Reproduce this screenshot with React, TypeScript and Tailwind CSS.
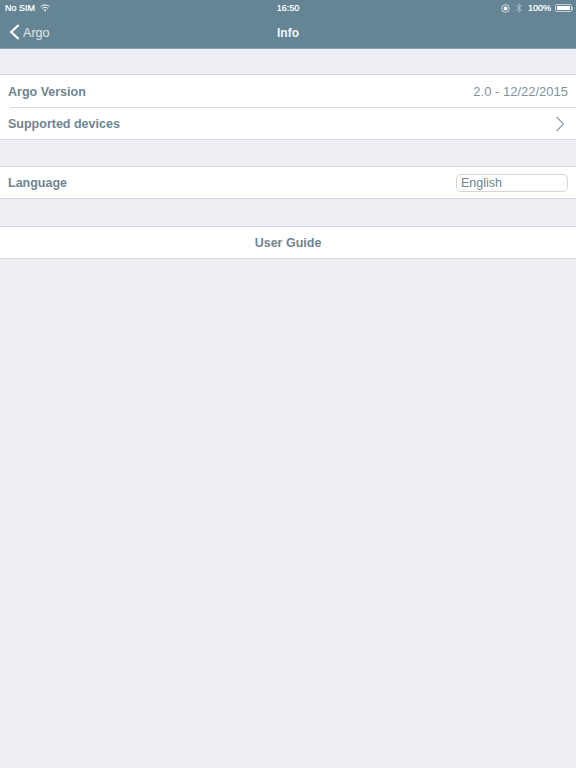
import React from 'react';

const font = "font-['Liberation_Sans',Arial,sans-serif]";

const StatusBar = () => (
	<div className="flex h-[16px] items-center justify-between pl-[5px] pr-[3px] text-[9px] leading-none text-white/90 [text-shadow:0_0_0.3px_white]">
		<div className="flex items-center gap-[5px]">
			<span>No SIM</span>
			<svg width="10" height="8" viewBox="0 0 10 8" fill="none" stroke="white" strokeWidth="1">
				<path d="M0.6 2.8 C3 0.4 7 0.4 9.4 2.8" />
				<path d="M2.2 4.4 C3.8 3 6.2 3 7.8 4.4" />
				<path d="M5 7.4 L3.7 6 C4.5 5.4 5.5 5.4 6.3 6 Z" fill="white" stroke="none" />
			</svg>
		</div>
		<span className="absolute left-0 right-0 text-center">16:50</span>
		<div className="z-10 flex items-center gap-[3px]">
			<svg width="9" height="9" viewBox="0 0 9 9">
				<circle cx="4.5" cy="4.5" r="3.8" fill="none" stroke="white" strokeWidth="0.9" opacity="0.8" />
				<circle cx="4.5" cy="4.5" r="1.9" fill="white" />
			</svg>
			<svg className="mx-[3px]" width="6" height="10" viewBox="0 0 6 10" fill="none" stroke="white" strokeWidth="0.8" opacity="0.55">
				<path d="M0.5 2.6 L5 6.8 L3 9 V1 L5 3.2 L0.5 7.4" />
			</svg>
			<span>100%</span>
			<div className="ml-[1px] flex items-center">
				<div className="flex h-[8px] w-[17px] items-center rounded-[2px] border border-white/60 p-px">
					<div className="h-full w-full rounded-[1px] bg-white" />
				</div>
				<div className="h-[3px] w-[1px] bg-white/60" />
			</div>
		</div>
	</div>
);

const NavBar = () => (
	<div className="relative flex h-[32px] items-center">
		<svg className="ml-[9px] mr-[3px]" width="11" height="16" viewBox="0 0 11 16" fill="none" stroke="white" strokeWidth="2.1">
			<path d="M9.6 1 L2.2 8 L9.6 15" />
		</svg>
		<span className="pt-[2px] text-[12.6px] text-white/80">Argo</span>
		<span className="absolute left-0 right-0 pt-[1px] text-center text-[12px] font-bold text-white/95">Info</span>
	</div>
);

const Label = ({ text }: { text: string }) => (
	<span className="pt-[2px] text-[12.5px] font-bold text-[#6f8592]">{text}</span>
);

export default function App() {
	return (
		<div className={`${font} relative min-h-[768px] bg-[#efeef5]`}>
			<header className="border-b border-[#8fa0ab] bg-[#658594]">
				<StatusBar />
				<NavBar />
			</header>

			<section className="mt-[25px] border-y border-[#d6d5e0] bg-white">
				<div className="flex h-[32px] items-center justify-between px-[8px]">
					<Label text="Argo Version" />
					<span className="pt-[2px] text-[13px] text-[#7f949f]">2.0 - 12/22/2015</span>
				</div>
				<div className="ml-[10px] h-px bg-[#d8d8de]" />
				<div className="flex h-[31px] items-center justify-between px-[8px] pr-[11px]">
					<Label text="Supported devices" />
					<svg width="10" height="16" viewBox="0 0 10 16" fill="none" stroke="#8b9aa3" strokeWidth="1.1">
						<path d="M1.5 1 L8.5 8 L1.5 15" />
					</svg>
				</div>
			</section>

			<section className="mt-[26px] border-y border-[#d6d5e0] bg-white">
				<div className="flex h-[31px] items-center justify-between px-[8px]">
					<Label text="Language" />
					<div className="flex h-[18px] w-[112px] items-center rounded-[5px] border border-[#d6d6d6] pl-[4px] pt-[2px] text-[12.5px] text-[#6f8592]">
						English
					</div>
				</div>
			</section>

			<section className="mt-[27px] border-y border-[#d6d5e0] bg-white">
				<div className="flex h-[31px] items-center justify-center">
					<Label text="User Guide" />
				</div>
			</section>
		</div>
	);
}
